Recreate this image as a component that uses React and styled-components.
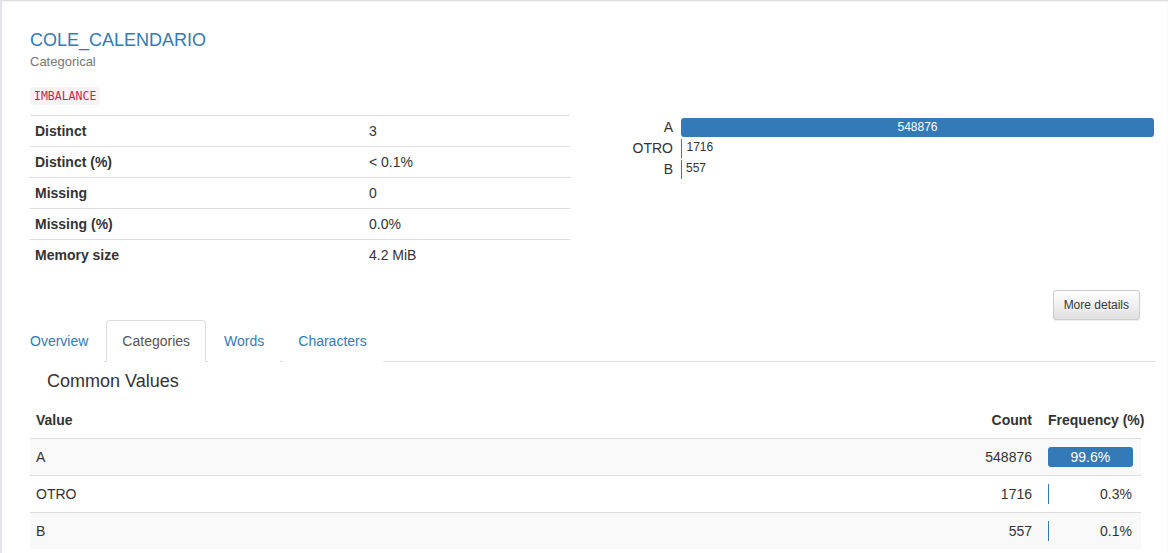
import React from 'react';
import styled, { createGlobalStyle } from 'styled-components';

const GlobalStyle = createGlobalStyle`
  html, body {
    margin: 0;
    padding: 0;
    background: #fff;
  }
  body {
    font-family: "Liberation Sans", Arial, Helvetica, sans-serif;
    font-size: 14px;
    line-height: 20px;
    color: #333;
  }
  * {
    box-sizing: border-box;
  }
`;

const Page = styled.div`
  border-left: 2px solid #e4e4e8;
  border-top: 1px solid #dedede;
  box-shadow: inset 0 1px 2px rgba(0, 0, 0, 0.05);
  padding: 0 12px;
  min-height: 553px;
`;

const TopRow = styled.div`
  display: flex;
  gap: 30px;
  padding: 29px 2px 0 16px;
`;

const InfoCol = styled.div`
  width: 540px;
  flex-shrink: 0;
`;

const VarName = styled.h2`
  margin: 0;
  font-size: 18px;
  line-height: 20px;
  font-weight: normal;
  color: #337ab7;
`;

const VarType = styled.div`
  margin-top: 3px;
  font-size: 13px;
  line-height: 18px;
  color: #777;
`;

const Badge = styled.code`
  display: block;
  width: fit-content;
  margin-top: 16px;
  padding: 2px 4px;
  font-family: "DejaVu Sans Mono", "Liberation Mono", monospace;
  font-size: 11.5px;
  line-height: 14px;
  color: #c7254e;
  background: #f9f2f4;
  border-radius: 4px;
`;

const StatList = styled.div`
  margin-top: 10px;
`;

const StatRow = styled.div`
  display: grid;
  grid-template-columns: 334px 1fr;
  align-items: center;
  height: 31px;
  border-top: 1px solid #ddd;
  font-size: 14px;
`;

const StatLabel = styled.div`
  padding: 0 5px;
  font-weight: bold;
`;

const StatValue = styled.div`
  padding: 0 5px;
`;

const ChartCol = styled.div`
  flex: 1;
  display: grid;
  grid-template-columns: 73px 1fr;
  grid-auto-rows: 19px;
  row-gap: 2px;
  column-gap: 8px;
  padding-top: 88px;
  align-self: flex-start;
`;

const ChartLabel = styled.div`
  text-align: right;
  font-size: 14px;
  line-height: 19px;
`;

const ChartTrack = styled.div`
  display: flex;
  align-items: center;
  height: 19px;
`;

const ChartBar = styled.div`
  height: 19px;
  min-width: 1px;
  background: #337ab7;
  border-radius: ${(p) => (p.$wide ? '3px' : '0')};
  color: #fff;
  font-size: 12px;
  line-height: 19px;
  text-align: center;
  flex-shrink: 0;
`;

const ChartCount = styled.span`
  margin-left: 4px;
  font-size: 12px;
  line-height: 17px;
  align-self: flex-start;
`;

const ButtonRow = styled.div`
  display: flex;
  justify-content: flex-end;
  padding: 20px 16px 0 0;
`;

const MoreButton = styled.button`
  font-family: inherit;
  font-size: 12px;
  line-height: 18px;
  padding: 5px 10px;
  color: #333;
  border: 1px solid #ccc;
  border-radius: 3px;
  background-image: linear-gradient(to bottom, #fff 0, #e0e0e0 100%);
  text-shadow: 0 1px 0 #fff;
  box-shadow: inset 0 1px 0 rgba(255, 255, 255, 0.15), 0 1px 1px rgba(0, 0, 0, 0.075);
  cursor: pointer;
`;

const Tabs = styled.ul`
  display: flex;
  margin: 0;
  padding: 0;
  list-style: none;
  border-bottom: 1px solid #ddd;
`;

const Tab = styled.li`
  margin: 0 2px -1px 0;
  padding: 10px 15px;
  font-size: 14px;
  line-height: 20px;
  border: 1px solid ${(p) => (p.$active ? '#ddd' : 'transparent')};
  border-bottom-color: ${(p) => (p.$active ? '#fff' : 'transparent')};
  border-radius: 4px 4px 0 0;
  background: #fff;
  color: ${(p) => (p.$active ? '#555' : '#337ab7')};
  cursor: pointer;
`;

const TabContent = styled.div`
  padding: 9px 15px 0 16px;
`;

const SectionTitle = styled.h4`
  margin: 0 0 11px 17px;
  font-size: 18px;
  line-height: 20px;
  font-weight: 500;
`;

const FreqTable = styled.table`
  width: 100%;
  border-collapse: collapse;
  table-layout: fixed;
`;

const Th = styled.th`
  padding: 8px;
  font-weight: bold;
  text-align: ${(p) => p.$align || 'left'};
  white-space: nowrap;
  overflow: visible;

  &:first-child {
    padding-left: 6px;
  }
`;

const Tr = styled.tr`
  background: ${(p) => (p.$striped ? '#f9f9f9' : '#fff')};
`;

const Td = styled.td`
  padding: 8px;
  border-top: 1px solid #ddd;
  text-align: ${(p) => p.$align || 'left'};

  &:first-child {
    padding-left: 6px;
  }
`;

const FreqCell = styled.div`
  display: flex;
  align-items: center;
  height: 20px;
`;

const FreqBar = styled.div`
  height: 20px;
  min-width: 1px;
  background: #337ab7;
  border-radius: ${(p) => (p.$wide ? '3px' : '0')};
  color: #fff;
  text-align: center;
  flex-shrink: 0;
`;

const FreqText = styled.span`
  flex: 1;
  text-align: right;
  padding-right: 1px;
`;

const stats = [
  ['Distinct', '3'],
  ['Distinct (%)', '< 0.1%'],
  ['Missing', '0'],
  ['Missing (%)', '0.0%'],
  ['Memory size', '4.2 MiB'],
];

const values = [
  { value: 'A', count: 548876, freq: 99.6 },
  { value: 'OTRO', count: 1716, freq: 0.3 },
  { value: 'B', count: 557, freq: 0.1 },
];

const maxCount = values[0].count;

const App = () => {
  return (
    <>
      <GlobalStyle />
      <Page>
        <TopRow>
          <InfoCol>
            <VarName>COLE_CALENDARIO</VarName>
            <VarType>Categorical</VarType>
            <Badge>IMBALANCE</Badge>
            <StatList>
              {stats.map(([label, value]) => (
                <StatRow key={label}>
                  <StatLabel>{label}</StatLabel>
                  <StatValue>{value}</StatValue>
                </StatRow>
              ))}
            </StatList>
          </InfoCol>

          <ChartCol>
            {values.map((v) => {
              const wide = v.count / maxCount > 0.2;
              return (
                <React.Fragment key={v.value}>
                  <ChartLabel>{v.value}</ChartLabel>
                  <ChartTrack>
                    <ChartBar $wide={wide} style={{ width: `${(v.count / maxCount) * 100}%` }}>
                      {wide && v.count}
                    </ChartBar>
                    {!wide && <ChartCount>{v.count}</ChartCount>}
                  </ChartTrack>
                </React.Fragment>
              );
            })}
          </ChartCol>
        </TopRow>

        <ButtonRow>
          <MoreButton>More details</MoreButton>
        </ButtonRow>

        <Tabs>
          <Tab>Overview</Tab>
          <Tab $active>Categories</Tab>
          <Tab>Words</Tab>
          <Tab>Characters</Tab>
        </Tabs>

        <TabContent>
          <SectionTitle>Common Values</SectionTitle>
          <FreqTable>
            <colgroup>
              <col />
              <col style={{ width: '120px' }} />
              <col style={{ width: '101px' }} />
            </colgroup>
            <thead>
              <tr>
                <Th>Value</Th>
                <Th $align="right">Count</Th>
                <Th>Frequency (%)</Th>
              </tr>
            </thead>
            <tbody>
              {values.map((v, i) => {
                const wide = v.freq > 20;
                return (
                  <Tr key={v.value} $striped={i % 2 === 0}>
                    <Td>{v.value}</Td>
                    <Td $align="right">{v.count}</Td>
                    <Td>
                      <FreqCell>
                        <FreqBar $wide={wide} style={{ width: `${v.freq}%` }}>
                          {wide && `${v.freq.toFixed(1)}%`}
                        </FreqBar>
                        {!wide && <FreqText>{v.freq.toFixed(1)}%</FreqText>}
                      </FreqCell>
                    </Td>
                  </Tr>
                );
              })}
            </tbody>
          </FreqTable>
        </TabContent>
      </Page>
    </>
  );
};

export default App;
